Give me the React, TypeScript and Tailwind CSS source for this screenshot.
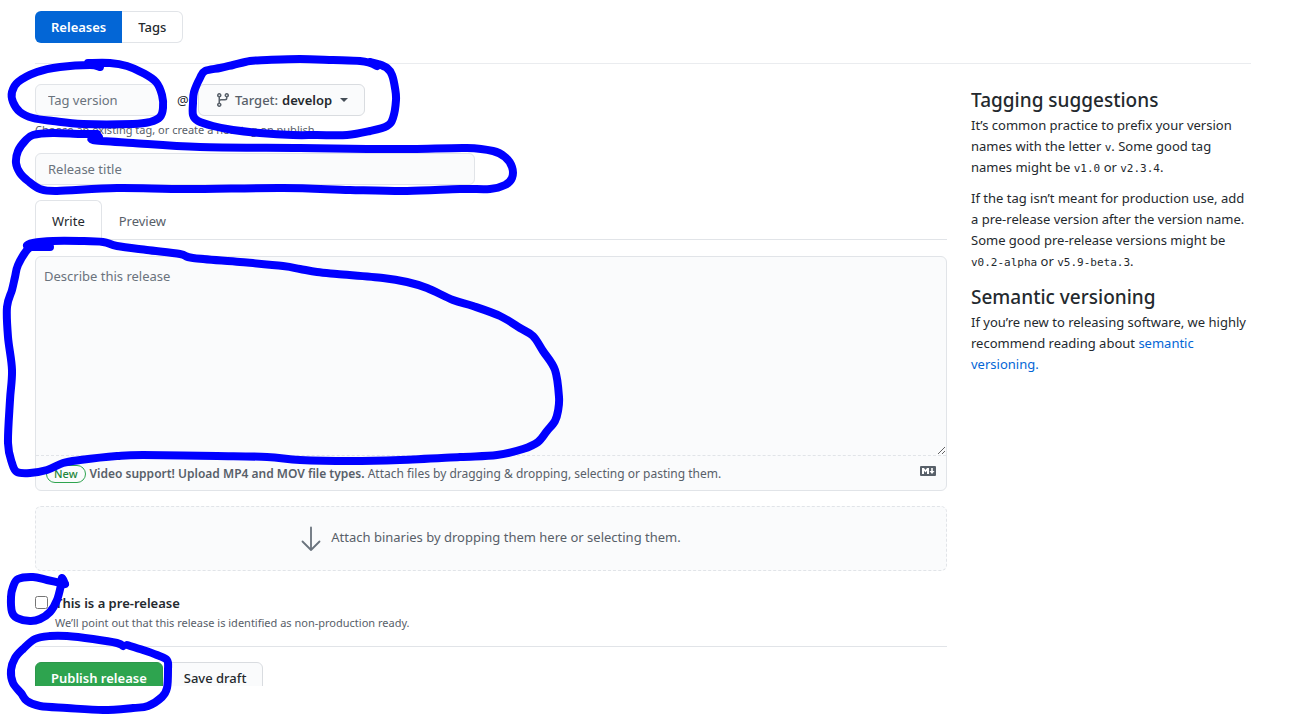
import type { ReactNode } from "react";

function BranchIcon() {
  return (
    <svg viewBox="0 0 16 16" className="size-4 fill-[#586069]" aria-hidden="true">
      <path
        fillRule="evenodd"
        d="M11.75 2.5a.75.75 0 100 1.5.75.75 0 000-1.5zm-2.25.75a2.25 2.25 0 113 2.122V6A2.5 2.5 0 0110 8.5H6a1 1 0 00-1 1v1.128a2.251 2.251 0 11-1.5 0V5.372a2.25 2.25 0 111.5 0v1.836A2.492 2.492 0 016 7h4a1 1 0 001-1v-.628A2.25 2.25 0 019.5 3.25zM4.25 12a.75.75 0 100 1.5.75.75 0 000-1.5zM3.5 3.25a.75.75 0 111.5 0 .75.75 0 01-1.5 0z"
      />
    </svg>
  );
}

function MarkdownIcon() {
  return (
    <svg viewBox="0 0 16 10" className="h-[10px] w-4" aria-hidden="true">
      <rect width="16" height="10" rx="1" fill="#586069" />
      <path d="M2 8V2h2l1.5 2L7 2h2v6H7V4.8L5.5 6.6 4 4.8V8z" fill="#fff" />
      <path d="M11.2 2h1.600v3h1.700L12 8 9.500 5h1.700z" fill="#fff" />
    </svg>
  );
}

function ArrowDown() {
  return (
    <svg
      viewBox="0 0 20 26"
      className="h-[26px] w-5 fill-none stroke-[#6a737d]"
      strokeWidth="1.8"
      strokeLinecap="round"
      strokeLinejoin="round"
      aria-hidden="true"
    >
      <path d="M10 1.500V24M1.500 15.500 10 24l8.500-8.500" />
    </svg>
  );
}

// Each stroke is a flat list of x, y pairs.
const inkStrokes = [
  [100, 67, 90, 65, 60, 67, 37, 72, 18, 82, 12, 92, 13, 102, 20, 112, 33, 118, 53, 121, 83, 124, 133, 124, 150, 122, 160, 117, 163, 108, 162, 95, 156, 82, 143, 73, 127, 66, 110, 63, 88, 63],
  [377, 66, 370, 63, 360, 61, 333, 60, 300, 59, 267, 60, 250, 61, 233, 65, 220, 68, 205, 71, 200, 78, 194, 92, 193, 103, 193, 115, 198, 121, 213, 126, 233, 130, 260, 133, 293, 135, 317, 135, 347, 135, 370, 131, 387, 126, 393, 118, 396, 100, 395, 88, 392, 75, 387, 68, 378, 64, 370, 62],
  [97, 134, 80, 134, 53, 133, 33, 135, 25, 141, 18, 151, 16, 163, 20, 173, 28, 181, 40, 189, 57, 191, 117, 188, 187, 189, 283, 188, 350, 190, 407, 191, 460, 189, 490, 189, 505, 185, 512, 178, 512, 167, 505, 157, 493, 151, 467, 148, 413, 149, 367, 149, 300, 148, 200, 147, 133, 143, 93, 140, 99, 137],
  [50, 247, 35, 247, 27, 246, 33, 243, 53, 241, 80, 241, 103, 242, 117, 246, 147, 250, 180, 254, 193, 258, 240, 262, 283, 266, 300, 269, 317, 272, 337, 274, 383, 278, 407, 282, 427, 288, 453, 300, 473, 306, 500, 316, 520, 328, 533, 336, 543, 351, 555, 370, 559, 397, 558, 411, 555, 421, 547, 431, 538, 442, 523, 449, 497, 455, 460, 457, 400, 460, 350, 461, 300, 460, 267, 457, 217, 456, 143, 455, 117, 456, 80, 460, 63, 463, 47, 470, 30, 473, 17, 472, 12, 463, 8, 443, 10, 400, 12, 370, 8, 337, 7, 307, 12, 290, 15, 277, 18, 265, 27, 250, 33, 246],
  [65, 584, 62, 578, 61, 585, 57, 600, 50, 612, 40, 619, 30, 621, 17, 618, 12, 612, 11, 597, 13, 587, 18, 579, 33, 577, 47, 580, 65, 584],
  [123, 646, 117, 643, 93, 639, 67, 636, 50, 636, 35, 639, 23, 649, 15, 658, 11, 670, 13, 683, 21, 693, 27, 701, 40, 706, 67, 708, 103, 710, 133, 708, 148, 706, 162, 697, 167, 688, 168, 670, 167, 660, 157, 655, 143, 650, 127, 645],
];

// Catmull-Rom spline through the points, written as cubic Béziers.
function smoothPath(flat: number[]) {
  const count = flat.length / 2;
  const at = (i: number) => {
    const k = Math.min(Math.max(i, 0), count - 1) * 2;
    return [flat[k], flat[k + 1]];
  };
  let d = `M${flat[0]} ${flat[1]}`;
  for (let i = 0; i < count - 1; i++) {
    const [a, b, c, e] = [at(i - 1), at(i), at(i + 1), at(i + 2)];
    d += `C${b[0] + (c[0] - a[0]) / 6} ${b[1] + (c[1] - a[1]) / 6} ${c[0] - (e[0] - b[0]) / 6} ${c[1] - (e[1] - b[1]) / 6} ${c[0]} ${c[1]}`;
  }
  return d;
}

function InkMarks() {
  return (
    <svg
      viewBox="0 0 600 714"
      className="pointer-events-none absolute top-0 left-0 h-[714px] w-[600px] fill-none stroke-[#0000ff]"
      strokeWidth="8"
      strokeLinecap="round"
      strokeLinejoin="round"
      aria-hidden="true"
    >
      {inkStrokes.map((points, i) => (
        <path key={i} d={smoothPath(points)} />
      ))}
    </svg>
  );
}

function Code({ children }: { children: ReactNode }) {
  return <code className="font-['DejaVu_Sans_Mono',monospace] text-[11px] leading-none">{children}</code>;
}

function Sidebar() {
  return (
    <aside className="w-[280px] shrink-0 pt-1 leading-[21px]">
      <h2 className="text-[19px] leading-6 font-medium">Tagging suggestions</h2>
      <p className="mt-[3px]">
        It’s common practice to prefix your version names with the letter <Code>v</Code>. Some good tag names might be{" "}
        <Code>v1.0</Code> or <Code>v2.3.4</Code>.
      </p>
      <p className="mt-[10px]">
        If the tag isn’t meant for production use, add a pre-release version after the version name. Some good
        pre-release versions might be <Code>v0.2-alpha</Code> or <Code>v5.9-beta.3</Code>.
      </p>
      <h2 className="mt-[13px] text-[19px] leading-6 font-medium">Semantic versioning</h2>
      <p className="mt-[3px]">
        If you’re new to releasing software, we highly recommend reading about{" "}
        <a href="#semver" className="text-[#0366d6]">
          semantic versioning.
        </a>
      </p>
    </aside>
  );
}

const field =
  "h-8 rounded-md border border-[#e1e4e8] bg-[#fafbfc] px-3 placeholder:text-[#6a737d] focus:outline-none";

export default function App() {
  return (
    <div className="relative min-h-screen bg-white pt-[11px] pr-6 pb-7 pl-[35px] font-['Noto_Sans','Open_Sans',sans-serif] text-[13px] leading-5 text-[#24292e]">
      <div className="max-w-[1216px]">
        <nav className="flex border-b border-[#eaecef] pb-5">
          <a
            href="#releases"
            className="flex h-8 items-center rounded-l-md bg-[#0366d6] px-4 font-semibold text-white"
          >
            Releases
          </a>
          <a
            href="#tags"
            className="flex h-8 items-center rounded-r-md border border-l-0 border-[#e1e4e8] px-4 font-medium"
          >
            Tags
          </a>
        </nav>

        <div className="flex gap-6 pt-5">
          <form className="min-w-0 flex-1" onSubmit={(e) => e.preventDefault()}>
            <div className="flex items-center">
              <input aria-label="Tag version" placeholder="Tag version" className={`${field} w-32`} />
              <span className="w-[35px] pl-[14px]">@</span>
              <button
                type="button"
                className="flex h-8 items-center rounded-md border border-[#d9dce0] bg-[#fafbfc] px-4 font-medium"
              >
                <BranchIcon />
                <span className="ml-1 text-[#586069]">Target:</span>
                <span className="ml-1 font-semibold">develop</span>
                <span className="ml-2 border-x-4 border-t-4 border-x-transparent border-t-[#444d56]" />
              </button>
            </div>
            <p className="mt-1 text-[11px] text-[#586069]">Choose an existing tag, or create a new tag on publish</p>
            <input
              aria-label="Release title"
              placeholder="Release title"
              className={`${field} mt-[13px] block w-[440px]`}
            />

            <div role="tablist" className="mt-[15px] flex h-10 border-b border-[#e1e4e8]">
              <button
                type="button"
                role="tab"
                aria-selected="true"
                className="h-10 rounded-t-md border border-b-0 border-[#e1e4e8] bg-white px-4"
              >
                Write
              </button>
              <button
                type="button"
                role="tab"
                aria-selected="false"
                className="h-10 border border-b-0 border-transparent px-4 text-[#586069]"
              >
                Preview
              </button>
            </div>

            <div className="mt-4 rounded-md border border-[#e1e4e8] bg-[#fafbfc]">
              <textarea
                aria-label="Describe this release"
                placeholder="Describe this release"
                className="block h-[199px] w-full resize-y border-b border-dashed border-[#e1e4e8] p-2 pt-[9px] placeholder:text-[#6a737d] focus:outline-none"
              />
              <div className="flex h-[34px] items-center justify-between px-[10px] text-[12px] text-[#586069]">
                <p className="flex items-center gap-1 pt-0.5">
                  <span className="rounded-full border border-[#2ea44f] px-[7px] text-[11px] leading-4 font-medium text-[#22863a]">
                    New
                  </span>
                  <span>
                    <strong className="font-semibold">Video support! Upload MP4 and MOV file types.</strong> Attach
                    files by dragging &amp; dropping, selecting or pasting them.
                  </span>
                </p>
                <a href="#markdown" aria-label="Styling with Markdown is supported" className="pb-1">
                  <MarkdownIcon />
                </a>
              </div>
            </div>

            <label className="mt-[15px] flex h-[65px] items-center justify-center gap-[10px] rounded-md border border-dashed border-[#e1e4e8] bg-[#fafbfc] text-[#586069]">
              <ArrowDown />
              <span className="pb-1">Attach binaries by dropping them here or selecting them.</span>
              <input type="file" className="sr-only" />
            </label>

            <div className="flex gap-[7px] border-b border-[#e1e4e8] pt-[22px] pb-[13px]">
              <input type="checkbox" id="prerelease" className="mt-[3px] size-[13px]" />
              <div>
                <label htmlFor="prerelease" className="block font-semibold">
                  This is a pre-release
                </label>
                <p className="text-[11px] text-[#586069]">
                  We’ll point out that this release is identified as non-production ready.
                </p>
              </div>
            </div>

            <div className="mt-[15px] flex h-6 items-start gap-1 overflow-hidden">
              <button
                type="submit"
                className="h-8 shrink-0 rounded-md border border-[#2c974b] bg-[#2ea44f] px-[15px] font-semibold text-white"
              >
                Publish release
              </button>
              <button
                type="button"
                className="h-8 shrink-0 rounded-md border border-[#d9dce0] bg-[#fafbfc] px-4 font-medium"
              >
                Save draft
              </button>
            </div>
          </form>
          <Sidebar />
        </div>
      </div>
      <InkMarks />
    </div>
  );
}
